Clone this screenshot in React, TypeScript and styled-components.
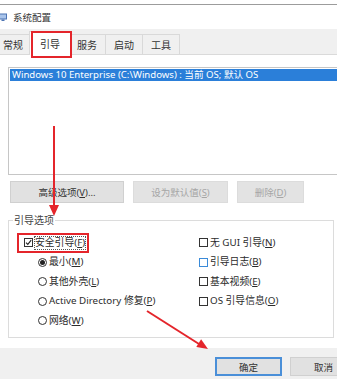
import React from "react";
import styled, { createGlobalStyle } from "styled-components";

const GlobalStyle = createGlobalStyle`
  html, body { margin: 0; padding: 0; background: #fff; }
  body { font-family: "Noto Sans", "Noto Sans CJK SC", sans-serif; }
`;

const FONT = `"Noto Sans", "Noto Sans CJK SC", sans-serif`;
const RED = "#e4252b";

const Window = styled.div`
  position: relative;
  width: 337px;
  height: 379px;
  overflow: hidden;
  background: #fff;
  display: flex;
  flex-direction: column;
  font-family: ${FONT};
  color: #262626;
`;

const TitleBar = styled.div`
  margin-top: 4px;
  border-top: 1px solid #9c9c9c;
  height: 24px;
  display: flex;
  align-items: center;
  gap: 6px;
  font-size: 9.5px;
  color: #333;
`;

const TabRow = styled.div`
  height: 25px;
  background: #f0f0f0;
  border-bottom: 1px solid #dadada;
  display: flex;
  align-items: flex-end;
  padding-left: 0;
  margin-left: -6px;
`;

const Tab = styled.div<{ $active?: boolean }>`
  position: relative;
  box-sizing: border-box;
  width: ${(p) => (p.$active ? 42 : 38)}px;
  height: ${(p) => (p.$active ? 24 : 21)}px;
  margin: 0 ${(p) => (p.$active ? -3 : -1)}px -1px ${(p) => (p.$active ? -2 : 0)}px;
  border: 1px solid #d9d9d9;
  border-bottom: ${(p) => (p.$active ? "none" : "1px solid #dadada")};
  background: ${(p) => (p.$active ? "#fff" : "#f0f0f0")};
  z-index: ${(p) => (p.$active ? 2 : 1)};
  display: flex;
  align-items: center;
  justify-content: center;
  font-size: 10px;
  color: #333;

  ${(p) =>
    p.$active &&
    `&::after {
      content: "";
      position: absolute;
      left: 1px;
      right: -2px;
      top: -1px;
      bottom: -3px;
      border: 2px solid ${RED};
    }`}
`;

const Page = styled.div`
  padding: 12px 3px 10px 8px;
  background: #fff;
  display: flex;
  flex-direction: column;
`;

const ListBox = styled.div`
  height: 108px;
  box-sizing: border-box;
  border: 1px solid #c6c6c6;
  border-right: none;
  margin-right: -6px;
  padding: 1px 0 0 1px;
`;

const ListItem = styled.div<{ $selected?: boolean }>`
  height: 12px;
  line-height: 12px;
  padding-left: 2px;
  font-size: 9.6px;
  white-space: nowrap;
  background: ${(p) => (p.$selected ? "#2b7fd9" : "transparent")};
  color: ${(p) => (p.$selected ? "#fff" : "#262626")};
`;

const ButtonRow = styled.div`
  margin: 6px 0 0 2px;
  display: flex;
  gap: 9px;
`;

const Button = styled.div<{ $w: number; $disabled?: boolean; $default?: boolean }>`
  box-sizing: border-box;
  width: ${(p) => p.$w}px;
  height: 22px;
  display: flex;
  align-items: center;
  justify-content: center;
  font-size: 9.5px;
  background: ${(p) => (p.$disabled ? "#e3e3e3" : "#e1e1e1")};
  border: ${(p) => (p.$default ? "2px solid #4a8fd8" : `1px solid ${p.$disabled ? "#dcdcdc" : "#d0d0d0"}`)};
  color: ${(p) => (p.$disabled ? "#a6a6a6" : "#333")};
  flex-shrink: 0;
`;

const GroupBox = styled.div`
  position: relative;
  margin-top: 17px;
  border: 1px solid #dcdcdc;
  padding: 12px 0 6.5px 15px;
`;

const GroupCaption = styled.span`
  position: absolute;
  top: -8px;
  left: 4px;
  padding: 0 1px;
  background: #fff;
  font-size: 10px;
  line-height: 14px;
  color: #444;
`;

const Columns = styled.div`
  display: grid;
  grid-template-columns: 175px 1fr;
`;

const Column = styled.div`
  display: flex;
  flex-direction: column;
`;

const OptionRow = styled.div<{ $indent?: number }>`
  height: 19.5px;
  display: flex;
  align-items: center;
  padding-left: ${(p) => p.$indent ?? 0}px;
`;

const Option = styled.span<{ $highlight?: boolean }>`
  display: inline-flex;
  align-items: center;
  gap: 2px;
  font-size: 9.8px;
  color: #2b2b2b;
  white-space: nowrap;
  ${(p) =>
    p.$highlight &&
    `box-sizing: border-box;
     height: 20px;
     margin-left: -7px;
     padding: 0 2px 0 5px;
     border: 2px solid ${RED};`}
`;

const OptionText = styled.span<{ $focus?: boolean }>`
  line-height: 12px;
  outline: ${(p) => (p.$focus ? "1px dotted #555" : "none")};
`;

const CheckBox = styled.span<{ $focus?: boolean }>`
  box-sizing: border-box;
  width: 9px;
  height: 9px;
  border: 1px solid ${(p) => (p.$focus ? "#3a8ad8" : "#333")};
  background: #fff;
  display: inline-flex;
  align-items: center;
  justify-content: center;
`;

const Radio = styled.span<{ $checked?: boolean }>`
  box-sizing: border-box;
  width: 9px;
  height: 9px;
  border-radius: 50%;
  border: 1px solid #333;
  background: #fff;
  display: inline-flex;
  align-items: center;
  justify-content: center;
  &::after {
    content: "";
    width: 5px;
    height: 5px;
    border-radius: 50%;
    background: ${(p) => (p.$checked ? "#222" : "transparent")};
  }
`;

const Footer = styled.div`
  flex: 1;
  background: #f0f0f0;
  display: flex;
  justify-content: flex-end;
  align-items: flex-start;
  gap: 8px;
  padding-top: 9px;
  margin-right: -20px;
`;

const Overlay = styled.svg`
  position: absolute;
  left: 0;
  top: 0;
  pointer-events: none;
  z-index: 10;
`;

const Key = ({ k }: { k: string }) => (
  <>
    (<u>{k}</u>)
  </>
);

const Check = () => (
  <svg width="7" height="7" viewBox="0 0 7 7">
    <path d="M1 3.6 L2.8 5.4 L6.2 1.2" fill="none" stroke="#222" strokeWidth="1.1" />
  </svg>
);

export default function App() {
  const tabs = ["常规", "引导", "服务", "启动", "工具"];
  return (
    <>
      <GlobalStyle />
      <Window>
        <TitleBar>
          <svg width="8" height="8" viewBox="0 0 8 8" style={{ marginLeft: -1 }}>
            <rect x="0" y="0.5" width="8" height="6" fill="#4d74b3" />
            <rect x="1" y="1.5" width="6" height="4" fill="#a9c4ea" />
            <rect x="2.5" y="6.5" width="3" height="1.5" fill="#4d74b3" />
          </svg>
          <span>系统配置</span>
        </TitleBar>
        <TabRow>
          {tabs.map((t) => (
            <Tab key={t} $active={t === "引导"}>
              {t}
            </Tab>
          ))}
        </TabRow>
        <Page>
          <ListBox>
            <ListItem $selected>Windows 10 Enterprise (C:\Windows) : 当前 OS; 默认 OS</ListItem>
          </ListBox>
          <ButtonRow>
            <Button $w={114}>
              高级选项<Key k="V" />...
            </Button>
            <Button $w={95} $disabled>
              设为默认值<Key k="S" />
            </Button>
            <Button $w={67} $disabled>
              删除<Key k="D" />
            </Button>
          </ButtonRow>
          <GroupBox>
            <GroupCaption>引导选项</GroupCaption>
            <Columns>
              <Column>
                <OptionRow>
                  <Option $highlight>
                    <CheckBox>
                      <Check />
                    </CheckBox>
                    <OptionText $focus>
                      安全引导<Key k="F" />
                    </OptionText>
                  </Option>
                </OptionRow>
                <OptionRow $indent={14}>
                  <Option>
                    <Radio $checked />
                    <OptionText>
                      最小<Key k="M" />
                    </OptionText>
                  </Option>
                </OptionRow>
                <OptionRow $indent={14}>
                  <Option>
                    <Radio />
                    <OptionText>
                      其他外壳<Key k="L" />
                    </OptionText>
                  </Option>
                </OptionRow>
                <OptionRow $indent={14}>
                  <Option>
                    <Radio />
                    <OptionText>
                      Active Directory 修复<Key k="P" />
                    </OptionText>
                  </Option>
                </OptionRow>
                <OptionRow $indent={14}>
                  <Option>
                    <Radio />
                    <OptionText>
                      网络<Key k="W" />
                    </OptionText>
                  </Option>
                </OptionRow>
              </Column>
              <Column>
                <OptionRow>
                  <Option>
                    <CheckBox />
                    <OptionText>
                      无 GUI 引导<Key k="N" />
                    </OptionText>
                  </Option>
                </OptionRow>
                <OptionRow>
                  <Option>
                    <CheckBox $focus />
                    <OptionText>
                      引导日志<Key k="B" />
                    </OptionText>
                  </Option>
                </OptionRow>
                <OptionRow>
                  <Option>
                    <CheckBox />
                    <OptionText>
                      基本视频<Key k="E" />
                    </OptionText>
                  </Option>
                </OptionRow>
                <OptionRow>
                  <Option>
                    <CheckBox />
                    <OptionText>
                      OS 引导信息<Key k="O" />
                    </OptionText>
                  </Option>
                </OptionRow>
              </Column>
            </Columns>
          </GroupBox>
        </Page>
        <Footer>
          <Button $w={67} $default style={{ height: 19 }}>
            确定
          </Button>
          <Button $w={67} style={{ height: 19 }}>
            取消
          </Button>
        </Footer>
        <Overlay width="337" height="379" viewBox="0 0 337 379">
          <line x1="54" y1="126" x2="54" y2="207" stroke={RED} strokeWidth="2" />
          <polygon points="49,205 59,205 54,216" fill={RED} />
          <line x1="147" y1="311" x2="199" y2="344" stroke={RED} strokeWidth="2" />
          <polygon points="196.3,346.9 201.1,339.3 208,349" fill={RED} />
        </Overlay>
      </Window>
    </>
  );
}
